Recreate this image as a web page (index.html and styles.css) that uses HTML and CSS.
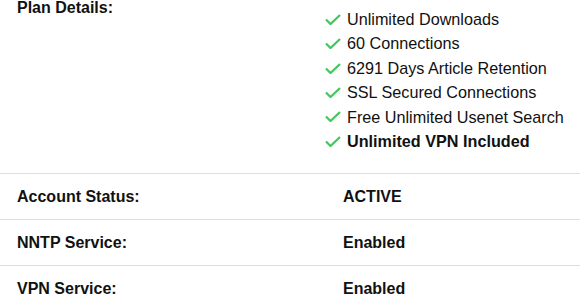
FILE: index.html
```html
<!DOCTYPE html>
<html lang="en">
<head>
    <meta charset="UTF-8">
    <title>Account</title>
    <link rel="stylesheet" href="styles.css">
</head>
<body>
    <div class="details">
        <div class="row plan-row">
            <div class="label plan-label">Plan Details:</div>
            <ul class="features">
                <li><svg class="check" viewBox="0 0 16 11"><path d="M1 5.5l4.5 4.5L15 1"/></svg>Unlimited Downloads</li>
                <li><svg class="check" viewBox="0 0 16 11"><path d="M1 5.5l4.5 4.5L15 1"/></svg>60 Connections</li>
                <li><svg class="check" viewBox="0 0 16 11"><path d="M1 5.5l4.5 4.5L15 1"/></svg>6291 Days Article Retention</li>
                <li><svg class="check" viewBox="0 0 16 11"><path d="M1 5.5l4.5 4.5L15 1"/></svg>SSL Secured Connections</li>
                <li><svg class="check" viewBox="0 0 16 11"><path d="M1 5.5l4.5 4.5L15 1"/></svg>Free Unlimited Usenet Search</li>
                <li class="strong"><svg class="check" viewBox="0 0 16 11"><path d="M1 5.5l4.5 4.5L15 1"/></svg>Unlimited VPN Included</li>
            </ul>
        </div>
        <div class="row">
            <div class="label">Account Status:</div>
            <div class="value">ACTIVE</div>
        </div>
        <div class="row">
            <div class="label">NNTP Service:</div>
            <div class="value">Enabled</div>
        </div>
        <div class="row">
            <div class="label">VPN Service:</div>
            <div class="value">Enabled</div>
        </div>
    </div>
</body>
</html>
```

FILE: styles.css
```css
body {
    margin: 0;
    font-family: "Liberation Sans", Arial, sans-serif;
    font-size: 16px;
    color: #111;
    background-color: #fff;
}

.details {
    width: 580px;
}

.row {
    display: grid;
    grid-template-columns: 326px 1fr;
    padding: 12px 0 12px 17px;
    line-height: 21px;
    border-bottom: 1px solid #dedede;
}

.row:last-child {
    border-bottom: none;
}

.label,
.value {
    font-weight: bold;
}

.plan-row {
    padding-top: 0;
    padding-bottom: 20px;
}

.plan-label {
    line-height: 16px;
}

.features {
    list-style: none;
    margin: 0 0 0 -18px;
    padding: 7px 0 0 0;
}

.features li {
    display: flex;
    align-items: center;
    line-height: 24.4px;
    font-size: 16.2px;
}

.features li.strong {
    font-weight: bold;
}

.check {
    width: 16px;
    height: 11px;
    margin-right: 6px;
    fill: none;
    stroke: #3fc85b;
    stroke-width: 2.2;
}
```
